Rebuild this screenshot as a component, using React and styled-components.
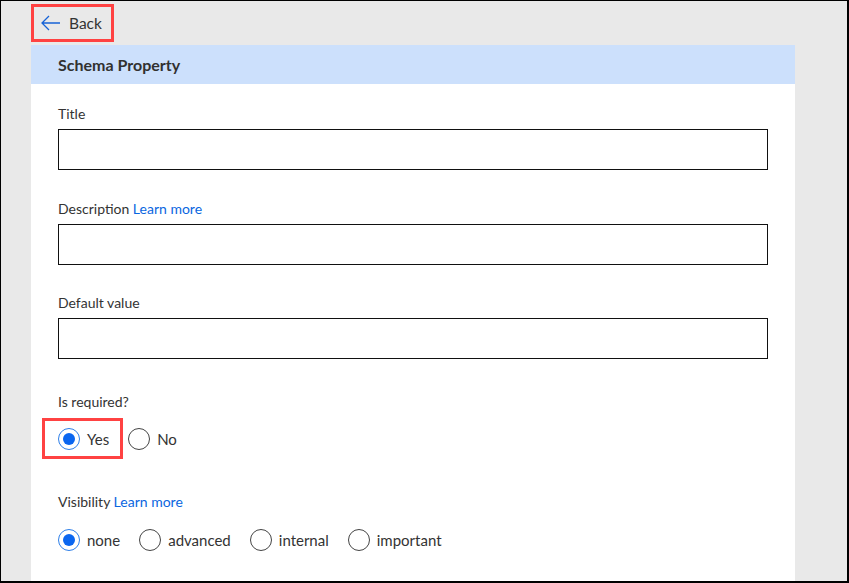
import React from 'react';
import styled, { createGlobalStyle } from 'styled-components';

const GlobalStyle = createGlobalStyle`
  html, body {
    margin: 0;
    padding: 0;
    background: #ffffff;
  }
  body {
    font-family: "Segoe UI", Lato, "Open Sans", sans-serif;
    color: #333333;
  }
`;

const Frame = styled.div`
  width: 849px;
  height: 583px;
  box-sizing: border-box;
  border-style: solid;
  border-color: #000;
  border-width: 1px 2px 2px 1px;
  background: #e9e9e9;
  padding: 3px 52px 0 30px;
  display: flex;
  flex-direction: column;
  overflow: hidden;
`;

const Highlight = styled.div`
  position: relative;
  display: inline-flex;

  &::after {
    content: '';
    position: absolute;
    top: ${p => p.$top}px;
    left: ${p => p.$left}px;
    right: ${p => p.$right}px;
    bottom: ${p => p.$bottom}px;
    border: 3px solid #ff4242;
    pointer-events: none;
  }
`;

const BackButton = styled.button`
  width: 82px;
  height: 38px;
  margin-left: 1px;
  box-sizing: border-box;
  border: none;
  background: transparent;
  display: flex;
  align-items: center;
  gap: 9px;
  padding: 0 0 0 9px;
  font-family: inherit;
  font-size: 15.5px;
  color: #333;
  cursor: pointer;
`;

const Panel = styled.section`
  flex: 1;
  margin-top: 3px;
  background: #fff;
  display: flex;
  flex-direction: column;
`;

const PanelHeader = styled.h2`
  margin: 0;
  height: 39px;
  line-height: 39px;
  padding-left: 27px;
  background: #cce0fc;
  font-size: 16px;
  font-weight: 700;
  color: #323130;
`;

const PanelBody = styled.div`
  padding: 20px 27px 0 27px;
  display: flex;
  flex-direction: column;
`;

const Field = styled.div`
  display: flex;
  flex-direction: column;
  margin-bottom: ${p => p.$gap}px;
`;

const Label = styled.label`
  font-size: 14px;
  line-height: 20px;
  height: 20px;
  color: #333;
`;

const Link = styled.a`
  color: #0a66e0;
  text-decoration: none;
  cursor: pointer;
`;

const TextInput = styled.input`
  margin-top: 5px;
  width: 710px;
  height: 41px;
  box-sizing: border-box;
  border: 1px solid #111;
  border-radius: 0;
  padding: 0 8px;
  font-family: inherit;
  font-size: 14px;
  outline: none;
`;

const RadioRow = styled.div`
  display: flex;
  align-items: center;
  gap: 19px;
  margin-top: ${p => p.$top}px;
  height: 22px;
`;

const RadioItem = styled.label`
  display: inline-flex;
  align-items: center;
  gap: 7px;
  font-size: 15px;
  color: #333;
  cursor: pointer;
`;

const RadioCircle = styled.span`
  width: 22px;
  height: 22px;
  box-sizing: border-box;
  border-radius: 50%;
  border: 1px solid ${p => (p.$checked ? '#2f7fe8' : '#444')};
  display: flex;
  align-items: center;
  justify-content: center;

  &::after {
    content: '';
    display: ${p => (p.$checked ? 'block' : 'none')};
    width: 12px;
    height: 12px;
    border-radius: 50%;
    background: #0a66f0;
  }
`;

const BackArrow = () => (
  <svg width="19" height="16" viewBox="0 0 19 16" fill="none">
    <path d="M1 8 H19 M8 1 L1 8 L8 15" stroke="#1763d6" strokeWidth="1.3" />
  </svg>
);

const Radio = ({ label, checked }) => (
  <RadioItem>
    <RadioCircle $checked={checked} />
    {label}
  </RadioItem>
);

const App = () => {
  return (
    <>
      <GlobalStyle />
      <Frame>
        <Highlight $top={0} $left={0} $right={0} $bottom={0} style={{ alignSelf: 'flex-start' }}>
          <BackButton>
            <BackArrow />
            Back
          </BackButton>
        </Highlight>
        <Panel>
          <PanelHeader>Schema Property</PanelHeader>
          <PanelBody>
            <Field $gap={29}>
              <Label>Title</Label>
              <TextInput />
            </Field>
            <Field $gap={28}>
              <Label>
                Description <Link>Learn more</Link>
              </Label>
              <TextInput />
            </Field>
            <Field $gap={33}>
              <Label>Default value</Label>
              <TextInput />
            </Field>
            <Field $gap={42}>
              <Label>Is required?</Label>
              <RadioRow $top={16}>
                <Highlight $top={-10} $left={-16} $right={-14} $bottom={-9}>
                  <Radio label="Yes" checked />
                </Highlight>
                <Radio label="No" />
              </RadioRow>
            </Field>
            <Field $gap={0}>
              <Label>
                Visibility <Link>Learn more</Link>
              </Label>
              <RadioRow $top={17}>
                <Radio label="none" checked />
                <Radio label="advanced" />
                <Radio label="internal" />
                <Radio label="important" />
              </RadioRow>
            </Field>
          </PanelBody>
        </Panel>
      </Frame>
    </>
  );
};

export default App;
